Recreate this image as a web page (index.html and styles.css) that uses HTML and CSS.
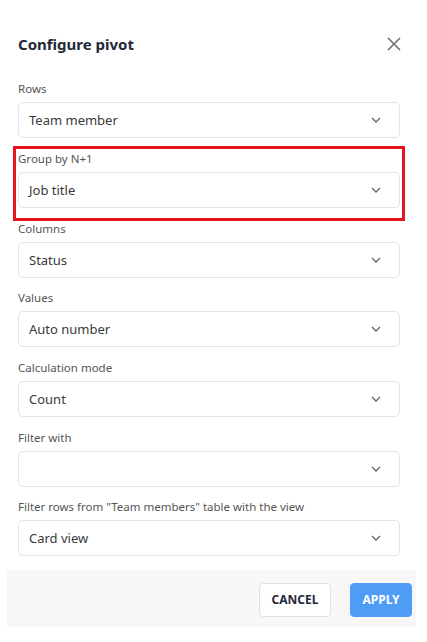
FILE: index.html
```html
<!DOCTYPE html>
<html>
<head>
<meta charset="utf-8">
<link rel="stylesheet" href="styles.css">
</head>
<body>
<div class="dialog">
  <div class="header">
    <h1 class="title">Configure pivot</h1>
    <svg class="close" width="14" height="14" viewBox="0 0 14 14"><path d="M1 1L13 13M13 1L1 13" stroke="#6b6b6b" stroke-width="1.5" fill="none"/></svg>
  </div>
  <div class="fields">
    <div class="field">
      <div class="label">Rows</div>
      <div class="select"><span>Team member</span><svg class="chev" width="10" height="6" viewBox="0 0 10 6"><path d="M1 1L5 5L9 1" stroke="#666" stroke-width="1.3" fill="none"/></svg></div>
    </div>
    <div class="field highlight">
      <div class="label">Group by N+1</div>
      <div class="select"><span>Job title</span><svg class="chev" width="10" height="6" viewBox="0 0 10 6"><path d="M1 1L5 5L9 1" stroke="#666" stroke-width="1.3" fill="none"/></svg></div>
    </div>
    <div class="field">
      <div class="label">Columns</div>
      <div class="select"><span>Status</span><svg class="chev" width="10" height="6" viewBox="0 0 10 6"><path d="M1 1L5 5L9 1" stroke="#666" stroke-width="1.3" fill="none"/></svg></div>
    </div>
    <div class="field">
      <div class="label">Values</div>
      <div class="select"><span>Auto number</span><svg class="chev" width="10" height="6" viewBox="0 0 10 6"><path d="M1 1L5 5L9 1" stroke="#666" stroke-width="1.3" fill="none"/></svg></div>
    </div>
    <div class="field">
      <div class="label">Calculation mode</div>
      <div class="select"><span>Count</span><svg class="chev" width="10" height="6" viewBox="0 0 10 6"><path d="M1 1L5 5L9 1" stroke="#666" stroke-width="1.3" fill="none"/></svg></div>
    </div>
    <div class="field">
      <div class="label">Filter with</div>
      <div class="select"><span></span><svg class="chev" width="10" height="6" viewBox="0 0 10 6"><path d="M1 1L5 5L9 1" stroke="#666" stroke-width="1.3" fill="none"/></svg></div>
    </div>
    <div class="field last">
      <div class="label">Filter rows from "Team members" table with the view</div>
      <div class="select"><span>Card view</span><svg class="chev" width="10" height="6" viewBox="0 0 10 6"><path d="M1 1L5 5L9 1" stroke="#666" stroke-width="1.3" fill="none"/></svg></div>
    </div>
  </div>
  <div class="footer">
    <button class="btn cancel">CANCEL</button>
    <button class="btn apply">APPLY</button>
  </div>
</div>
</body>
</html>
```
FILE: styles.css
```css
html, body {
  margin: 0;
  padding: 0;
  background: #ffffff;
}
body {
  font-family: "Noto Sans", "Open Sans", "Liberation Sans", sans-serif;
  color: #333;
}
.dialog {
  width: 427px;
  padding-top: 33px;
  box-sizing: border-box;
}
.header {
  display: flex;
  align-items: center;
  justify-content: space-between;
  padding: 0 26px 0 18px;
  width: 427px;
  box-sizing: border-box;
  height: 22px;
}
.title {
  margin: 0;
  font-size: 15px;
  font-weight: 700;
  color: #1f2937;
  line-height: 22px;
}
.close {
  display: block;
  margin-top: 0;
}
.fields {
  margin: 26px 0 0 18px;
  width: 382px;
}
.field {
  margin-bottom: 12.67px;
}
.field.last {
  margin-bottom: 0;
}
.label {
  font-size: 11.5px;
  line-height: 16px;
  color: #555;
  margin-bottom: 5px;
  white-space: nowrap;
}
.select {
  height: 36px;
  box-sizing: border-box;
  border: 1px solid #e3e3e3;
  border-radius: 5px;
  display: flex;
  align-items: center;
  justify-content: space-between;
  padding: 0 18px 0 10px;
  font-size: 13px;
  color: #3a3a3a;
  background: #fff;
}
.chev {
  display: block;
}
.highlight {
  margin: -5px -5px 0 -5px;
  border: 3px solid #e8141e;
  padding: 2px 2px 10px 2px;
}
.footer {
  margin: 14px 11px 0 7px;
  height: 57px;
  background: #f7f7f7;
  display: flex;
  align-items: center;
  justify-content: flex-end;
  gap: 19px;
  padding-right: 4px;
  padding-top: 2px;
  box-sizing: border-box;
}
.btn {
  height: 34px;
  border-radius: 4px;
  font-family: "Noto Sans", "Open Sans", "Liberation Sans", sans-serif;
  font-size: 12px;
  font-weight: 700;
  cursor: pointer;
  padding: 0;
}
.cancel {
  width: 72px;
  background: #fff;
  border: 1px solid #e2e2e2;
  color: #1f2937;
}
.apply {
  width: 62px;
  background: #4f9cf6;
  border: 1px solid #4f9cf6;
  color: #fff;
}
```
